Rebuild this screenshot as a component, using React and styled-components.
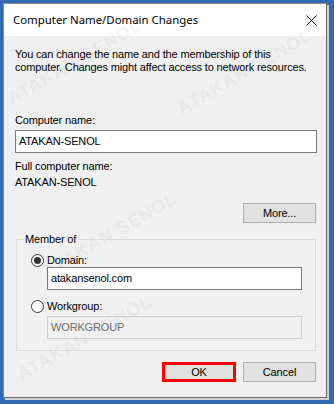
import styled, { createGlobalStyle } from "styled-components";

const GlobalStyle = createGlobalStyle`
  html, body {
    margin: 0;
    padding: 0;
  }
  body {
    background: #336bb3;
    font-family: "Liberation Sans", Arial, sans-serif;
  }
`;

// faint watermark copies that sit over the dialog
const marks = [
  { x: 75, y: 62 },
  { x: 245, y: 72 },
  { x: 110, y: 235 },
  { x: 85, y: 338 },
];

const CloseIcon = () => (
  <svg width="11" height="11" viewBox="0 0 11 11">
    <path d="M0.5 0.5 L10.5 10.5 M10.5 0.5 L0.5 10.5" stroke="#000" strokeWidth="1" fill="none" />
  </svg>
);

const App = () => {
  return (
    <>
      <GlobalStyle />
      <Frame>
        <Dialog>
          <TitleBar>
            <Title>Computer Name/Domain Changes</Title>
            <CloseIcon />
          </TitleBar>

          <Body>
            <Intro>
              You can change the name and the membership of this
              <br />
              computer. Changes might affect access to network resources.
            </Intro>

            <Caption $gap={40}>Computer name:</Caption>
            <TextBox $gap={3}>ATAKAN-SENOL</TextBox>

            <Caption $gap={7}>Full computer name:</Caption>
            <Caption $gap={3}>ATAKAN-SENOL</Caption>

            <ButtonRow $gap={14}>
              <Button>More...</Button>
            </ButtonRow>

            <Group>
              <Legend>Member of</Legend>
              <RadioRow $gap={8}>
                <Radio $checked />
                <span>Domain:</span>
              </RadioRow>
              <TextBox $indent>atakansenol.com</TextBox>
              <RadioRow $gap={10}>
                <Radio />
                <span>Workgroup:</span>
              </RadioRow>
              <TextBox $indent $gap={3} $disabled>
                WORKGROUP
              </TextBox>
            </Group>

            <ButtonRow $gap={11}>
              <Button $marked>OK</Button>
              <Button>Cancel</Button>
            </ButtonRow>
          </Body>
        </Dialog>

        <Watermarks>
          {marks.map((m, i) => (
            <Mark key={i} style={{ left: m.x, top: m.y }}>
              ATAKAN SENOL
            </Mark>
          ))}
        </Watermarks>
      </Frame>
    </>
  );
};

export default App;

const Frame = styled.div`
  position: relative;
  width: 334px;
  height: 404px;
  box-sizing: border-box;
  padding: 3px 7px 6px 3px;
  background: #336bb3;
  display: flex;
  overflow: hidden;
`;

const Dialog = styled.div`
  flex: 1;
  display: flex;
  flex-direction: column;
  border: 1px solid #8a8a8a;
  border-right-color: #6a6a6a;
  border-bottom-color: #6a6a6a;
  box-shadow: 2px 2px 0 #cfcfcf;
  background: #f0f0f0;
`;

const TitleBar = styled.div`
  flex: none;
  height: 32px;
  background: #fff;
  display: flex;
  align-items: center;
  justify-content: space-between;
  padding: 0 9px 0 9px;
`;

const Title = styled.span`
  font-family: "Noto Sans", "Liberation Sans", sans-serif;
  font-size: 11.4px;
  line-height: 32px;
  color: #000;
`;

const Body = styled.div`
  flex: 1;
  display: flex;
  flex-direction: column;
  padding: 12px 9px 0 11px;
  font-size: 11px;
  line-height: 13px;
  letter-spacing: -0.15px;
  color: #000;
`;

const Intro = styled.p`
  margin: 0;
  white-space: nowrap;
`;

const Caption = styled.div`
  margin-top: ${({ $gap }) => $gap || 0}px;
`;

const TextBox = styled.div`
  box-sizing: border-box;
  height: 23px;
  margin-top: ${({ $gap }) => $gap || 0}px;
  margin-left: ${({ $indent }) => ($indent ? 16 : 0)}px;
  padding: 0 3px;
  display: flex;
  align-items: center;
  border: 1px solid ${({ $disabled }) => ($disabled ? "#cccccc" : "#7a7a7a")};
  background: ${({ $disabled }) => ($disabled ? "#f0f0f0" : "#fff")};
  color: ${({ $disabled }) => ($disabled ? "#6d6d6d" : "#000")};
`;

const ButtonRow = styled.div`
  display: flex;
  justify-content: flex-end;
  gap: 7px;
  margin-top: ${({ $gap }) => $gap || 0}px;
  padding-right: 1px;
`;

const Button = styled.div`
  box-sizing: border-box;
  width: ${({ $marked }) => ($marked ? 74 : 73)}px;
  height: 20px;
  display: flex;
  align-items: center;
  justify-content: center;
  background: #e1e1e1;
  border: ${({ $marked }) => ($marked ? "3px solid #ff0000" : "1px solid #adadad")};
  font-size: 11px;
  color: #000;
`;

const Group = styled.fieldset`
  margin: 10px 1px 0;
  padding: 0 13px 11px 14px;
  border: 1px solid #dcdcdc;
  min-width: 0;
`;

const Legend = styled.legend`
  margin-left: -8px;
  padding: 0 2px;
  line-height: 13px;
`;

const RadioRow = styled.div`
  display: flex;
  align-items: center;
  gap: 3px;
  height: 13px;
  margin-top: ${({ $gap }) => $gap || 0}px;
`;

const Radio = styled.span`
  position: relative;
  box-sizing: border-box;
  width: 13px;
  height: 13px;
  border-radius: 50%;
  border: 1px solid #333;
  background: #fff;
  flex: none;

  &::after {
    content: "";
    display: ${({ $checked }) => ($checked ? "block" : "none")};
    position: absolute;
    left: 2px;
    top: 2px;
    width: 7px;
    height: 7px;
    border-radius: 50%;
    background: #333;
  }
`;

const Watermarks = styled.div`
  position: absolute;
  inset: 0;
  pointer-events: none;
  overflow: hidden;
`;

const Mark = styled.span`
  position: absolute;
  transform: translate(-50%, -50%) rotate(-30deg);
  font-family: "Liberation Sans", Arial, sans-serif;
  font-weight: bold;
  font-size: 18px;
  letter-spacing: 1px;
  white-space: nowrap;
  color: rgba(0, 0, 0, 0.055);
`;
